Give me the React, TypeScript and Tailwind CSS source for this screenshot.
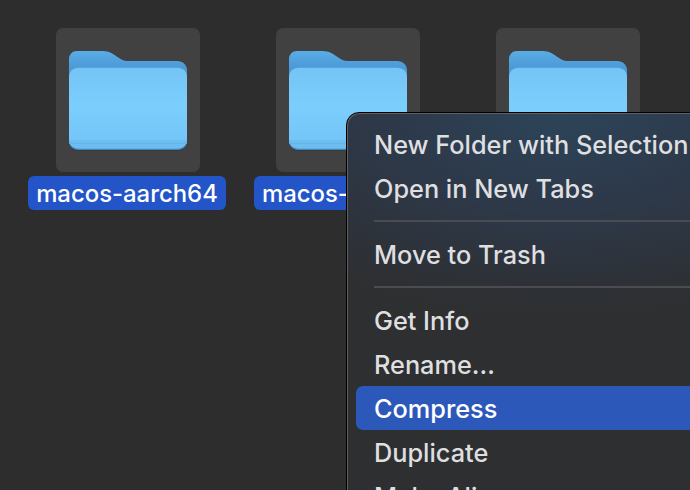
const FONT = "font-['Inter','Liberation_Sans',sans-serif]";

function Folder() {
  return (
    <svg width="118" height="100" viewBox="0 0 118 100" className="block">
      <defs>
        <linearGradient id="back" x1="0" y1="0" x2="0" y2="1">
          <stop offset="0" stopColor="#5AADE6" />
          <stop offset="0.16" stopColor="#4C9AD6" />
          <stop offset="1" stopColor="#3F8BC9" />
        </linearGradient>
        <linearGradient id="front" x1="0" y1="0" x2="0" y2="1">
          <stop offset="0" stopColor="#74C4F6" />
          <stop offset="0.45" stopColor="#7BCEFC" />
          <stop offset="1" stopColor="#72C4F7" />
        </linearGradient>
      </defs>
      <path d="M3 97H115V98C115 99 113 100 108 100H10C5 100 3 99 3 98Z" fill="#2b2b2b" fillOpacity="0.35" />
      <path
        d="M8 0H33C38 0 41 1 44 3L50 7C53 9 55 10 58 10H108C114 10 118 14 118 19V89C118 95 114 99 108 99H10C4 99 0 95 0 89V8C0 3.500 3.500 0 8 0Z"
        fill="url(#back)"
      />
      <path
        d="M10 16.700H108C114 16.700 118 20.500 118 26V89C118 94 114 98 108 98H10C4 98 0 94 0 89V26C0 20.500 4 16.700 10 16.700Z"
        fill="url(#front)"
      />
      <path d="M0 89H118C118 94 114 98 108 98H10C4 98 0 94 0 89Z" fill="#6DBDF0" />
      <rect x="0" y="92" width="118" height="1" fill="#64B4E9" />
      <path d="M0 89C0 95 4 99 10 99H108C114 99 118 95 118 89C118 94 114 97.700 108 97.700H10C4 97.700 0 94 0 89Z" fill="#3E86BE" />
    </svg>
  );
}

function FileItem({ name }: { name: string }) {
  return (
    <div className="flex w-[220px] shrink-0 flex-col items-center">
      <div className="flex h-[144px] w-[144px] items-start justify-center rounded-[7px] bg-[#414141] pt-[23px]">
        <Folder />
      </div>
      <div className="-ml-[2px] mt-1 h-[34px] min-w-[186px] whitespace-nowrap rounded-[6px] bg-[#2354c8] px-2 text-[23.900px] font-[450] leading-[36px] text-white">
        {name}
      </div>
    </div>
  );
}

function Item({ label, active }: { label: string; active?: boolean }) {
  return (
    <div
      className={
        "h-11 rounded-l-[7px] pl-[18px] text-[25.300px] font-[450] leading-[46px] whitespace-nowrap " +
        (active ? "bg-[#2c58ba] text-white" : "text-[#dfdfe0]")
      }
    >
      {label}
    </div>
  );
}

function Separator() {
  return <div className="my-[10px] ml-[18px] h-[2px] bg-[#4b4c4f]" />;
}

export default function App() {
  return (
    <div className={"relative h-[490px] w-[690px] overflow-hidden bg-[#2d2d2d] " + FONT}>
      <div className="flex pl-[18px] pt-[28px]">
        <FileItem name="macos-aarch64" />
        <FileItem name="macos-x86_64" />
        <FileItem name="windows" />
      </div>
      <div className="absolute left-[346px] top-[112px] h-[420px] w-[420px] rounded-[13px] border border-black bg-[radial-gradient(ellipse_380px_200px_at_215px_0px,#2d4459_0%,#2d3848_50%,#2e2f31_100%)] pl-[9px] pt-[9px] shadow-[inset_1px_1px_0_#5e6064]">
        <Item label="New Folder with Selection" />
        <Item label="Open in New Tabs" />
        <Separator />
        <Item label="Move to Trash" />
        <Separator />
        <Item label="Get Info" />
        <Item label="Rename..." />
        <Item label="Compress" active />
        <Item label="Duplicate" />
        <Item label="Make Alias" />
      </div>
    </div>
  );
}
